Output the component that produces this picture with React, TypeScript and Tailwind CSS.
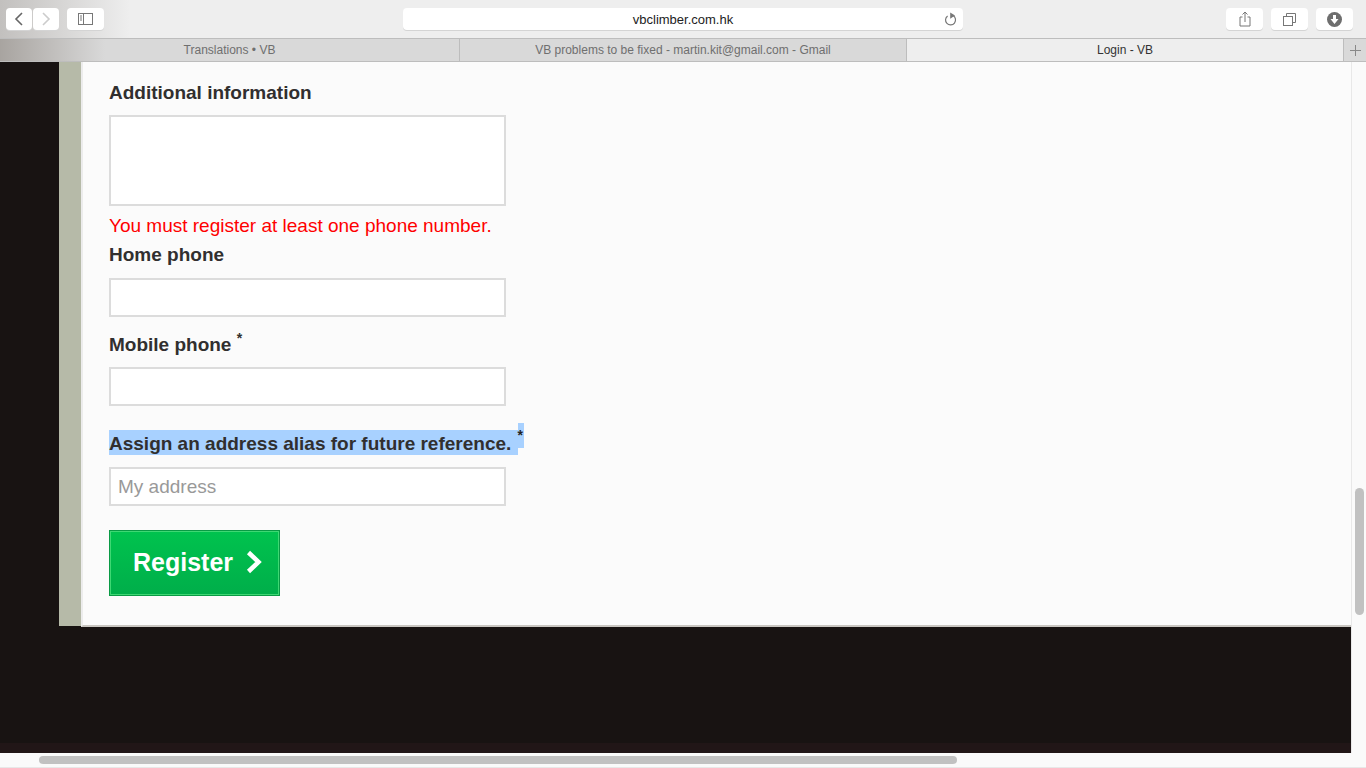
import React from 'react';

const toolBtn = 'h-[22px] bg-white rounded-[4px] shadow-[0_1px_0_#d4d4d4] flex items-center justify-center';
const inputBox = 'block w-[397px] h-[39px] border-2 border-[#dcdcdc] bg-white';
const labelText = 'font-bold text-[19px] leading-[24px] text-[#312f2f]';

const Toolbar = () => (
  <div className="relative h-[38px] bg-[#eeeeee] flex items-start pt-2 pl-[6px] pr-[13px]">
    {/* window corner fade */}
    <div className="absolute inset-y-0 left-0 w-[130px] bg-gradient-to-r from-[#c2c0be] to-[#eeeeee]" />
    <div className="relative flex gap-px">
      <div className={`${toolBtn} w-[26px]`}>
        <svg width="10" height="14" viewBox="0 0 10 14" fill="none" stroke="#666" strokeWidth="1.6"><path d="M8 1 L2 7 L8 13" /></svg>
      </div>
      <div className={`${toolBtn} w-[26px]`}>
        <svg width="10" height="14" viewBox="0 0 10 14" fill="none" stroke="#ccc" strokeWidth="1.6"><path d="M2 1 L8 7 L2 13" /></svg>
      </div>
    </div>
    <div className={`${toolBtn} relative w-[37px] ml-2`}>
      <svg width="15" height="12" viewBox="0 0 15 12" fill="none" stroke="#777" strokeWidth="1">
        <rect x="0.5" y="0.5" width="14" height="11" />
        <path d="M5.5 0.5 V11.5" />
        <path d="M2 3 H4 M2 5 H4 M2 7 H4" />
      </svg>
    </div>
    <div className={`${toolBtn} w-[560px] ml-[299px] relative pt-[2px]`}>
      <span className="text-[13px] text-[#222]">vbclimber.com.hk</span>
      <svg className="absolute right-[6px] top-[4px]" width="13" height="14" viewBox="0 0 13 14" fill="none">
        <path d="M3.6 3.9 A5 5 0 1 0 9 3.6" stroke="#777" strokeWidth="1.2" />
        <path d="M6.2 0.4 L11 3.6 L6.2 6.8 Z" fill="#777" />
      </svg>
    </div>
    <div className="ml-auto flex gap-[8px]">
      <div className={`${toolBtn} w-[37px]`}>
        <svg width="12" height="16" viewBox="0 0 12 16" fill="none" stroke="#777" strokeWidth="1">
          <path d="M3.5 6 H1 V15 H11 V6 H8.5" />
          <path d="M6 11 V1 M3.5 3.5 L6 1 L8.5 3.5" />
        </svg>
      </div>
      <div className={`${toolBtn} w-[37px]`}>
        <svg width="13" height="13" viewBox="0 0 13 13" fill="none" stroke="#777" strokeWidth="1">
          <rect x="0.5" y="3.5" width="9" height="9" />
          <path d="M3.5 3.5 V0.5 H12.5 V9.5 H9.5" />
        </svg>
      </div>
      <div className={`${toolBtn} w-[37px]`}>
        <svg width="15" height="15" viewBox="0 0 15 15">
          <circle cx="7.5" cy="7.5" r="7.5" fill="#6e6e6e" />
          <path d="M6 3 H9 V7 H11.5 L7.5 12 L3.5 7 H6 Z" fill="#fff" />
        </svg>
      </div>
    </div>
  </div>
);

const TabBar = () => (
  <div className="h-[24px] flex border-y border-[#bdbdbd] text-[12px] leading-[22px] text-center">
    <div className="relative w-[460px] bg-[#d9d9d9] text-[#6f6f6f] border-r border-[#bdbdbd]">
      <div className="absolute inset-y-0 left-0 w-[105px] bg-gradient-to-r from-[#a8a4a0] to-[#d9d9d9]" />
      <span className="relative">Translations • VB</span>
    </div>
    <div className="w-[447px] bg-[#d9d9d9] text-[#6f6f6f] border-r border-[#bdbdbd]">
      VB problems to be fixed - martin.kit@gmail.com - Gmail
    </div>
    <div className="w-[436px] bg-[#eeeeee] text-[#333]">Login - VB</div>
    <div className="w-[23px] bg-[#d9d9d9] border-l border-[#bdbdbd] flex items-center justify-center">
      <svg width="11" height="11" viewBox="0 0 11 11" stroke="#888" strokeWidth="1"><path d="M5.5 0 V11 M0 5.5 H11" /></svg>
    </div>
  </div>
);

const Form = () => (
  <div className="flex-1 bg-[#fbfbfb] pl-[26px] pt-[19px] border-l-2 border-b-2 border-l-[#ececec] border-b-[#c9c6c1]">
    <div className={labelText}>Additional information</div>
    <div className="w-[397px] h-[91px] mt-[10px] border-2 border-[#dcdcdc] bg-white" />
    <div className="mt-[8px] text-[19px] leading-[24px] text-[#ff0000]">You must register at least one phone number.</div>
    <div className={`${labelText} mt-[5px]`}>Home phone</div>
    <div className={`${inputBox} mt-[11px]`} />
    <div className={`${labelText} mt-[16px]`}>
      Mobile phone <sup className="text-[14px] leading-none relative -top-[8px]">*</sup>
    </div>
    <div className={`${inputBox} mt-[10px]`} />
    <div className={`${labelText} mt-[24px] relative h-[25px]`}>
      <span className="bg-[#a8d1ff] inline-block h-[25px] leading-[27px] pr-px">Assign an address alias for future reference.&nbsp;</span>
      <span className="absolute top-[-7px] bg-[#a8d1ff] h-[25px] w-[6px] text-[14px] leading-[25px] text-[#222]">*</span>
    </div>
    <div className={`${inputBox} mt-[12px] pl-[7px] text-[19px] leading-[36px] text-[#999999]`}>My address</div>
    <button className="mt-[24px] w-[171px] h-[66px] bg-gradient-to-b from-[#00c34e] to-[#00ae4a] border border-[#0a9a45] shadow-[inset_0_0_0_1px_#3ed873] flex items-center pl-[23px] text-white font-bold text-[25px]">
      Register
      <svg className="ml-[13px] mb-[2px]" width="16" height="24" viewBox="0 0 16 24" fill="none" stroke="#fff" strokeWidth="4.5"><path d="M2.5 2.5 L12.5 12 L2.5 21.5" /></svg>
    </button>
  </div>
);

export default function App() {
  return (
    <div className="w-[1366px] h-[768px] overflow-hidden flex flex-col bg-[#fbfbfb] font-['Liberation_Sans',Arial,sans-serif]">
      <Toolbar />
      <TabBar />
      <div className="h-[691px] flex">
        <div className="w-[1351px] bg-[#181312] flex flex-col">
          <div className="h-[565px] flex pl-[59px]">
            <div className="w-[22px] h-[564px] bg-[#b6baa8]" />
            <Form />
          </div>
          <div className="flex-1" />
          <div className="h-[10px] bg-[#211617]" />
        </div>
        <div className="flex-1 bg-[#fafafa] border-l border-[#e8e8e8] pl-[3px]">
          <div className="mt-[426px] w-[9px] h-[127px] rounded-full bg-[#c1c1c1]" />
        </div>
      </div>
      <div className="h-[15px] bg-[#fafafa] border-b border-[#e8e8e8] pl-[39px] pt-[3px]">
        <div className="w-[918px] h-[8px] rounded-full bg-[#c1c1c1]" />
      </div>
    </div>
  );
}
